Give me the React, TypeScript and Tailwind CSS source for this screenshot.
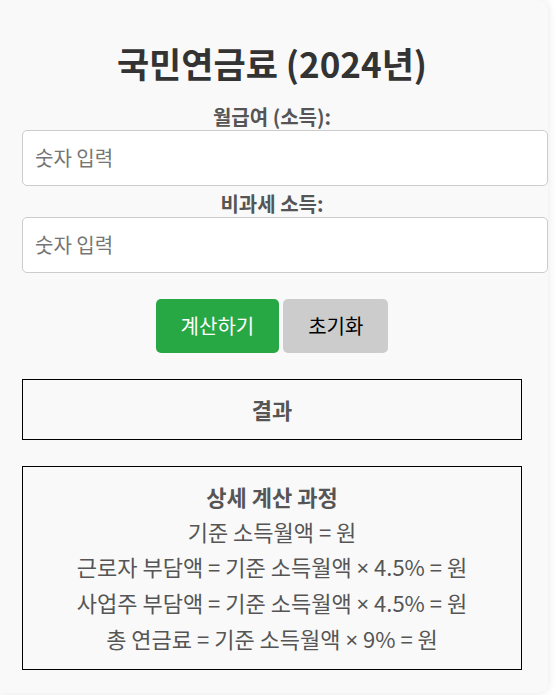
import React from "react";

const font = { fontFamily: '"Noto Sans CJK KR", "Noto Sans", sans-serif' };

const Times = () => <span className="font-['Noto_Sans',sans-serif]">×</span>;

const App = () => {
  return (
    <div className="min-h-[695px] bg-white" style={font}>
      <div className="w-[548px] bg-[#f9f9f9] rounded-r-[10px] shadow-[0_0_10px_rgba(0,0,0,0.1)] pl-[22px] pr-[26px] pt-[40px] pb-[23px]">
        <h1 className="text-center text-[35px] leading-[46px] font-bold text-[#333]">
          국민연금료 (2024년)
        </h1>

        <label className="block text-center text-[20px] leading-[24px] font-bold text-[#555] mt-[19px] mb-[1px]">
          월급여 (소득):
        </label>
        <input
          type="text"
          placeholder="숫자 입력"
          className="box-content block w-full h-[30px] px-[12px] py-[12px] border border-[#ccc] rounded-[5px] bg-white text-[20px] placeholder:text-[#757575]"
        />

        <label className="block text-center text-[20px] leading-[24px] font-bold text-[#555] mt-[6px] mb-[1px]">
          비과세 소득:
        </label>
        <input
          type="text"
          placeholder="숫자 입력"
          className="box-content block w-full h-[30px] px-[12px] py-[12px] border border-[#ccc] rounded-[5px] bg-white text-[20px] placeholder:text-[#757575]"
        />

        <div className="flex justify-center gap-[4px] mt-[26px]">
          <button className="h-[54px] px-[25px] rounded-[5px] bg-[#28a745] text-white text-[20px]">
            계산하기
          </button>
          <button className="h-[54px] px-[25px] rounded-[5px] bg-[#ccc] text-black text-[20px]">
            초기화
          </button>
        </div>

        <div className="mt-[26px] border border-black py-[15px] text-center text-[22px] leading-[29px] font-bold text-[#555]">
          결과
        </div>

        <div className="mt-[26px] border border-black py-[12px] text-center text-[22px] leading-[35px] text-[#555]">
          <p className="font-bold">상세 계산 과정</p>
          <p>기준 소득월액 = 원</p>
          <p>
            근로자 부담액 = 기준 소득월액 <Times /> 4.5% = 원
          </p>
          <p>
            사업주 부담액 = 기준 소득월액 <Times /> 4.5% = 원
          </p>
          <p>
            총 연금료 = 기준 소득월액 <Times /> 9% = 원
          </p>
        </div>
      </div>
    </div>
  );
};

export default App;
